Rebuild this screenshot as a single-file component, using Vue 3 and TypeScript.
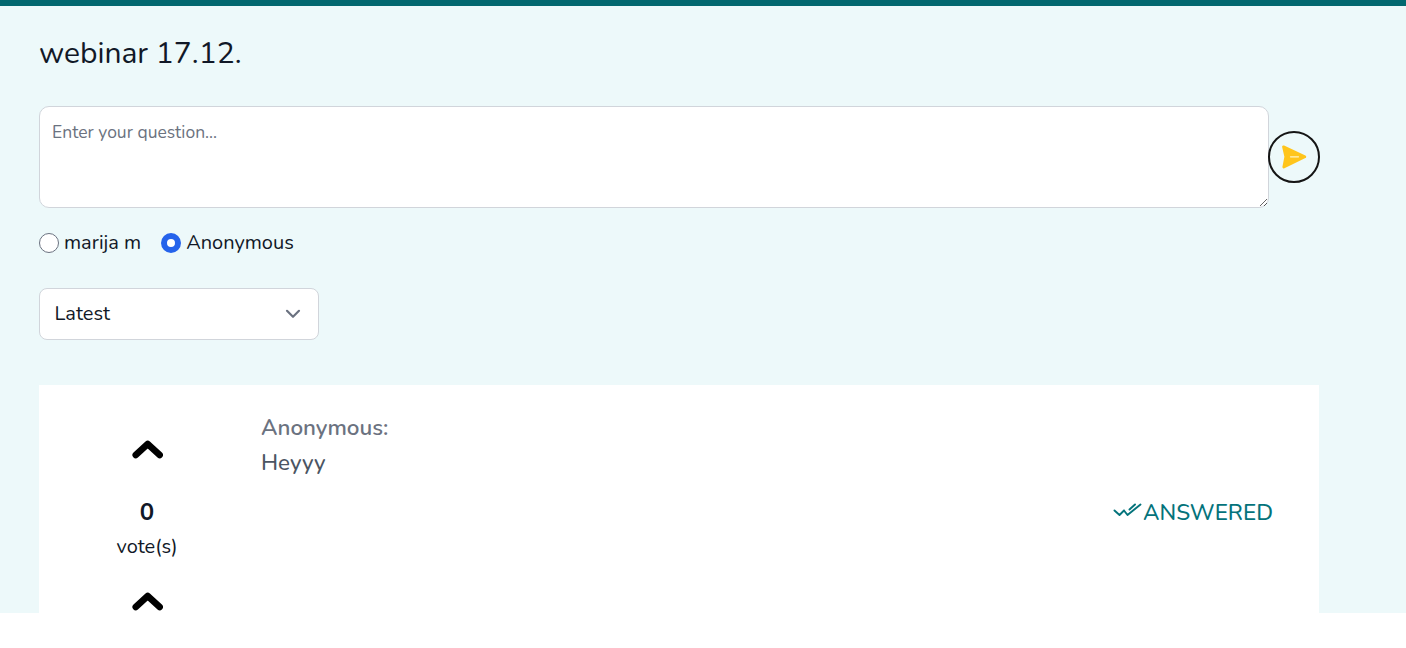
<script setup lang="ts">
import { ref } from 'vue'
const mode = ref('anon')
</script>

<template>
  <div class="page">
    <div class="inner">
      <h1 class="title">webinar 17.12.</h1>
      <div class="ask">
        <textarea class="input" placeholder="Enter your question..."></textarea>
        <button class="send" aria-label="Send">
          <svg width="28" height="28" viewBox="0 0 28 28">
            <path d="M3.500 3.800 L24.800 13.800 L3.800 24 L5.800 13.800 Z" fill="#ffc51c" stroke="#ffc51c" stroke-width="2.800" stroke-linejoin="round"/>
            <path d="M10.500 13.800H18.500" fill="none" stroke="#fff3c4" stroke-width="1.200" stroke-linecap="round"/>
          </svg>
        </button>
      </div>
      <div class="radios">
        <label class="radio"><input v-model="mode" type="radio" value="name" /><span class="dot"></span>marija m</label>
        <label class="radio"><input v-model="mode" type="radio" value="anon" /><span class="dot"></span>Anonymous</label>
      </div>
      <div class="select">
        <span class="select-text">Latest</span>
        <svg width="16" height="10" viewBox="0 0 16 10"><path d="M2 1.800l6 6 6-6" fill="none" stroke="#6b7280" stroke-width="2.200" stroke-linecap="round" stroke-linejoin="round"/></svg>
      </div>
      <div class="card">
        <div class="votes">
          <svg class="chev" width="32" height="20" viewBox="0 0 32 20"><path d="M4.700 16 L16.700 5 L28.700 16" fill="none" stroke="#000" stroke-width="6.500" stroke-linecap="round" stroke-linejoin="round"/></svg>
          <div class="count">0</div>
          <div class="label">vote(s)</div>
          <svg class="chev lower" width="32" height="20" viewBox="0 0 32 20"><path d="M4.700 16 L16.700 5 L28.700 16" fill="none" stroke="#000" stroke-width="6.500" stroke-linecap="round" stroke-linejoin="round"/></svg>
        </div>
        <div class="body">
          <div class="author">Anonymous:</div>
          <div class="text">Heyyy</div>
        </div>
        <div class="status">
          <svg width="29" height="18" viewBox="0 0 29 18"><path d="M1.500 7.500l5 4.500 4.500-4.500M11 7.500l3.500 4.500L27.500 1.500M16.500 6.500l5.500-5" fill="none" stroke="#04737b" stroke-width="1.900" stroke-linecap="round" stroke-linejoin="round"/></svg>
          <span>ANSWERED</span>
        </div>
      </div>
    </div>
  </div>
</template>

<style>
html, body { margin: 0; background: #fff; }
</style>

<style scoped>
.page {
  height: 613px;
  box-sizing: border-box;
  border-top: 6px solid #02686f;
  background: #edf9fa;
  overflow: hidden;
  font-family: "Nunito", "Open Sans", "Noto Sans", sans-serif;
  color: #111827;
}
.inner { width: 1280px; margin-left: 39px; }
.title { margin: 0; padding-top: 28px; font-size: 30px; line-height: 40px; font-weight: 400; height: 72px; }
.ask { display: flex; align-items: center; }
.input {
  flex: none;
  width: 1230px; height: 102px; box-sizing: border-box; padding: 13px 12px;
  border: 1px solid #d1d5db; border-radius: 10px; background: #fff;
  font: inherit; font-size: 17.5px; line-height: 24px; display: block; outline: none;
}
.input::placeholder { color: #6b7280; }
.send {
  flex: none;
  width: 52px; height: 52px; margin-left: -1px; box-sizing: border-box; padding: 0;
  border: 2px solid #151515; border-radius: 50%; background: transparent;
  display: flex; align-items: center; justify-content: center;
}
.radios { display: flex; gap: 20px; margin-top: 22px; font-size: 20px; line-height: 26px; }
.radio { display: flex; align-items: center; gap: 5px; }
.radio input { position: absolute; opacity: 0; }
.dot { width: 20px; height: 20px; box-sizing: border-box; border: 1px solid #6b7280; border-radius: 50%; background: #fff; }
.radio input:checked + .dot { border: 6px solid #2563eb; }
.select {
  width: 280px; height: 52px; box-sizing: border-box; margin-top: 32px; padding: 0 17px 0 15px;
  background: #fff; border: 1px solid #d1d5db; border-radius: 8px;
  display: flex; align-items: center; justify-content: space-between; font-size: 20px;
}
.select-text { line-height: 50px; height: 50px; margin-left: -0.5px; }
.card { margin-top: 45px; background: #fff; height: 300px; display: flex; position: relative; }
.votes { width: 216px; flex: none; display: flex; flex-direction: column; align-items: center; padding-top: 54px; }
.chev { display: block; }
.count { margin-top: 37px; font-size: 24px; line-height: 32px; font-weight: 700; }
.label { font-size: 20px; line-height: 28px; margin-top: 5px; }
.lower { margin-top: 30px; }
.body { margin-left: 6px; padding-top: 27px; }
.author { font-size: 22.4px; line-height: 32px; font-weight: 600; color: #6b7280; }
.text { font-size: 22.4px; line-height: 32px; margin-top: 3px; font-weight: 500; color: #4b5563; }
.status { position: absolute; right: 46px; top: 112px; display: flex; align-items: center; gap: 1px; color: #04737b; font-size: 22.5px; line-height: 32px; font-weight: 500; }
.status svg { margin-top: -3px; }
</style>
